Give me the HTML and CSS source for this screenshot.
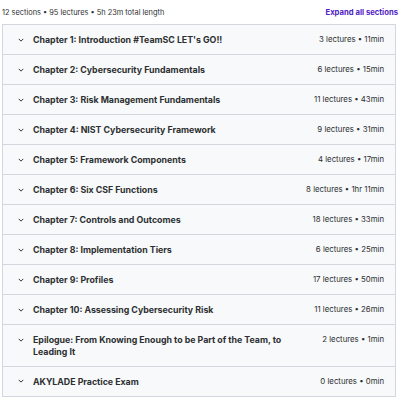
FILE: index.html
```html
<!DOCTYPE html>
<html>
<head>
<meta charset="utf-8">
<link rel="stylesheet" href="styles.css">
</head>
<body>
<div class="page">
  <div class="header">
    <span class="summary">12 sections • 95 lectures • 5h 23m total length</span>
    <span class="expand">Expand all sections</span>
  </div>
  <div class="list">
    <div class="row"><span class="chev"><svg viewBox="0 0 8 5" width="6" height="4"><path d="M1 1l3 3 3-3" fill="none" stroke="#2d2f31" stroke-width="1.3"/></svg></span><span class="title">Chapter 1: Introduction #TeamSC LET's GO!!</span><span class="meta">3 lectures • 11min</span></div>
    <div class="row"><span class="chev"><svg viewBox="0 0 8 5" width="6" height="4"><path d="M1 1l3 3 3-3" fill="none" stroke="#2d2f31" stroke-width="1.3"/></svg></span><span class="title">Chapter 2: Cybersecurity Fundamentals</span><span class="meta">6 lectures • 15min</span></div>
    <div class="row"><span class="chev"><svg viewBox="0 0 8 5" width="6" height="4"><path d="M1 1l3 3 3-3" fill="none" stroke="#2d2f31" stroke-width="1.3"/></svg></span><span class="title">Chapter 3: Risk Management Fundamentals</span><span class="meta">11 lectures • 43min</span></div>
    <div class="row"><span class="chev"><svg viewBox="0 0 8 5" width="6" height="4"><path d="M1 1l3 3 3-3" fill="none" stroke="#2d2f31" stroke-width="1.3"/></svg></span><span class="title">Chapter 4: NIST Cybersecurity Framework</span><span class="meta">9 lectures • 31min</span></div>
    <div class="row"><span class="chev"><svg viewBox="0 0 8 5" width="6" height="4"><path d="M1 1l3 3 3-3" fill="none" stroke="#2d2f31" stroke-width="1.3"/></svg></span><span class="title">Chapter 5: Framework Components</span><span class="meta">4 lectures • 17min</span></div>
    <div class="row"><span class="chev"><svg viewBox="0 0 8 5" width="6" height="4"><path d="M1 1l3 3 3-3" fill="none" stroke="#2d2f31" stroke-width="1.3"/></svg></span><span class="title">Chapter 6: Six CSF Functions</span><span class="meta">8 lectures • 1hr 11min</span></div>
    <div class="row"><span class="chev"><svg viewBox="0 0 8 5" width="6" height="4"><path d="M1 1l3 3 3-3" fill="none" stroke="#2d2f31" stroke-width="1.3"/></svg></span><span class="title">Chapter 7: Controls and Outcomes</span><span class="meta">18 lectures • 33min</span></div>
    <div class="row"><span class="chev"><svg viewBox="0 0 8 5" width="6" height="4"><path d="M1 1l3 3 3-3" fill="none" stroke="#2d2f31" stroke-width="1.3"/></svg></span><span class="title">Chapter 8: Implementation Tiers</span><span class="meta">6 lectures • 25min</span></div>
    <div class="row"><span class="chev"><svg viewBox="0 0 8 5" width="6" height="4"><path d="M1 1l3 3 3-3" fill="none" stroke="#2d2f31" stroke-width="1.3"/></svg></span><span class="title">Chapter 9: Profiles</span><span class="meta">17 lectures • 50min</span></div>
    <div class="row"><span class="chev"><svg viewBox="0 0 8 5" width="6" height="4"><path d="M1 1l3 3 3-3" fill="none" stroke="#2d2f31" stroke-width="1.3"/></svg></span><span class="title">Chapter 10: Assessing Cybersecurity Risk</span><span class="meta">11 lectures • 26min</span></div>
    <div class="row"><span class="chev"><svg viewBox="0 0 8 5" width="6" height="4"><path d="M1 1l3 3 3-3" fill="none" stroke="#2d2f31" stroke-width="1.3"/></svg></span><span class="title">Epilogue: From Knowing Enough to be Part of the Team, to Leading It</span><span class="meta">2 lectures • 1min</span></div>
    <div class="row"><span class="chev"><svg viewBox="0 0 8 5" width="6" height="4"><path d="M1 1l3 3 3-3" fill="none" stroke="#2d2f31" stroke-width="1.3"/></svg></span><span class="title">AKYLADE Practice Exam</span><span class="meta">0 lectures • 0min</span></div>
  </div>
</div>
</body>
</html>
```
FILE: styles.css
```css
* { box-sizing: border-box; }
html, body { margin: 0; padding: 0; background: #fff; }
body { font-family: "Inter", "Liberation Sans", sans-serif; color: #2d2f31; }
.page { padding: 0 4px 0 2px; }
.header {
  height: 24px;
  display: flex;
  align-items: center;
  justify-content: space-between;
  margin-right: -2px;
  padding-top: 1px;
}
.summary { font-size: 7.4px; color: #2d2f31; }
.expand { font-size: 7.7px; font-weight: 700; color: #5022c3; }
.list { border: 1px solid #d1d7dc; }
.row {
  display: flex;
  align-items: flex-start;
  background: #f7f9fa;
  border-bottom: 1px solid #d1d7dc;
  padding: 9px 11px 8.5px 15px;
}
.row:last-child { border-bottom: none; }
.chev { width: 15px; flex: none; height: 11.5px; display: flex; align-items: center; }
.chev svg { display: block; }
.title {
  flex: 1;
  font-size: 8.8px;
  font-weight: 700;
  line-height: 11.5px;
  margin-right: 30px;
}
.meta { flex: none; font-size: 7.8px; line-height: 11.5px; color: #2d2f31; }
```
